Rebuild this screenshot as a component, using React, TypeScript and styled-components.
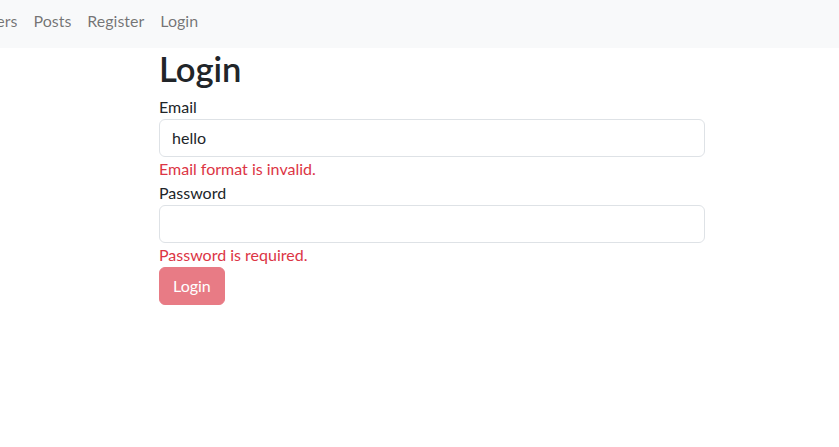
import styled, { createGlobalStyle } from "styled-components";

const GlobalStyle = createGlobalStyle`
  * { box-sizing: border-box; }
  body {
    margin: 0;
    background: #fff;
    color: #212529;
    font-family: "Segoe UI", Lato, "Noto Sans", sans-serif;
    font-size: 16px;
    line-height: 1.5;
    overflow: hidden;
  }
`;

const Navbar = styled.nav`
  height: 48px;
  padding-bottom: 6px;
  background: #f8f9fa;
  display: flex;
  align-items: center;
  overflow: hidden;
`;

const NavList = styled.div`
  display: flex;
  margin-left: -30px;
`;

const NavLink = styled.a`
  padding: 8px;
  color: rgba(0, 0, 0, 0.55);
  text-decoration: none;
  white-space: nowrap;
  cursor: pointer;
`;

const Main = styled.main`
  width: 546px;
  margin-left: 159px;
`;

const Title = styled.h1`
  margin: 0 0 5px;
  font-size: 34.6px;
  font-weight: 600;
  line-height: 1.2;
  color: #212529;
`;

const Form = styled.form`
  display: flex;
  flex-direction: column;
  align-items: flex-start;
`;

const Label = styled.label`
  display: block;
`;

const Input = styled.input`
  display: block;
  width: 100%;
  height: 38px;
  padding: 6px 12px;
  font: inherit;
  color: #212529;
  background: #fff;
  border: 1px solid #dee2e6;
  border-radius: 6px;
  outline: none;
`;

const ErrorText = styled.div`
  color: #dc3545;
`;

const Button = styled.button<{ $disabled?: boolean }>`
  height: 38px;
  padding: 6px 13px;
  font: inherit;
  color: #fff;
  background: #dc3545;
  border: 1px solid #dc3545;
  border-radius: 6px;
  opacity: ${(p) => (p.$disabled ? 0.65 : 1)};
`;

export default function App() {
  return (
    <>
      <GlobalStyle />
      <Navbar>
        <NavList>
          <NavLink>Users</NavLink>
          <NavLink>Posts</NavLink>
          <NavLink>Register</NavLink>
          <NavLink>Login</NavLink>
        </NavList>
      </Navbar>
      <Main>
        <Title>Login</Title>
        <Form onSubmit={(e) => e.preventDefault()}>
          <Label htmlFor="email">Email</Label>
          <Input id="email" defaultValue="hello" />
          <ErrorText>Email format is invalid.</ErrorText>
          <Label htmlFor="password">Password</Label>
          <Input id="password" type="password" />
          <ErrorText>Password is required.</ErrorText>
          <Button type="submit" $disabled>
            Login
          </Button>
        </Form>
      </Main>
    </>
  );
}
